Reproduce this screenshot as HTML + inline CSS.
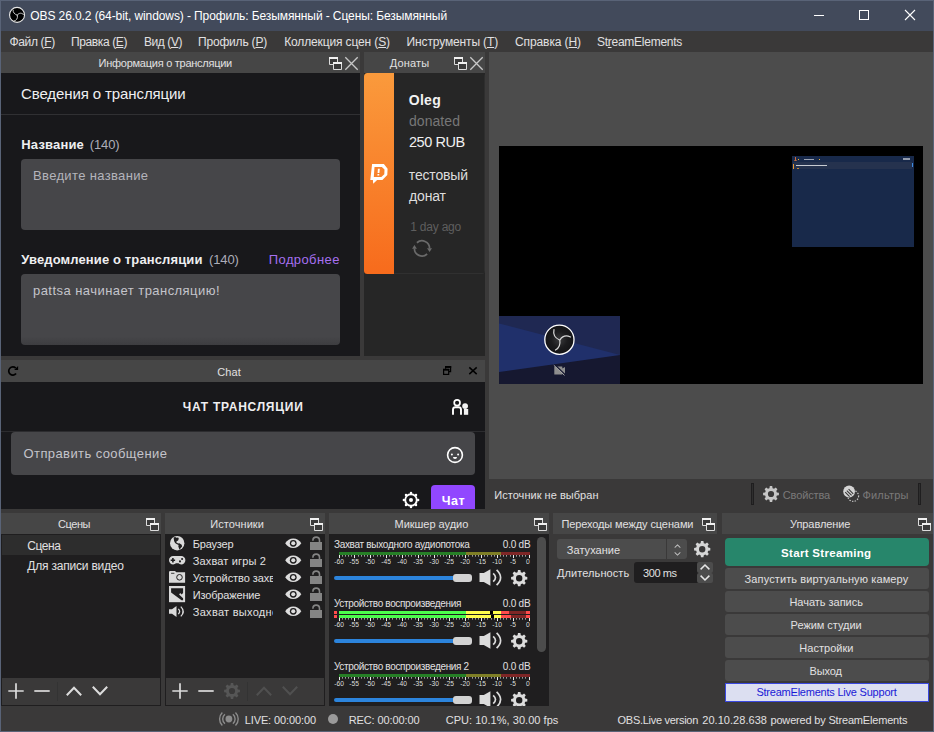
<!DOCTYPE html>
<html><head><meta charset="utf-8">
<style>
*{box-sizing:border-box;margin:0;padding:0}
html,body{width:934px;height:732px;overflow:hidden;background:#3a3939}
body{position:relative;font-family:"Liberation Sans",sans-serif;font-size:12px;color:#e1e0e1}
.a{position:absolute}
.t{position:absolute;white-space:nowrap;line-height:1}
.dt{position:absolute;background:#464646;height:21px}
.dk{background:#1f1e1f}
svg{position:absolute;overflow:visible}
.btn{position:absolute;left:725px;width:204px;height:21px;background:#4c4c4c;border-radius:3px}
</style></head><body>

<svg width="0" height="0" style="left:0;top:0"><defs>
<symbol id="fl" viewBox="0 0 13 13" overflow="visible"><path d="M.5 .5h8v7h-8z" fill="#3a3a3a" stroke="#dcdcdc" stroke-width="1"/><path d="M0 1h9" stroke="#f0f0f0" stroke-width="2"/><path d="M4.500 5.500h8v7h-8z" fill="#3a3a3a" stroke="#dcdcdc" stroke-width="1"/><path d="M4 6h9" stroke="#f0f0f0" stroke-width="2"/></symbol>
<symbol id="cx" viewBox="0 0 13 13" overflow="visible"><path d="M.3 .3L12.700 12.700M12.700 .3L.3 12.700" stroke="#c8c8c8" stroke-width="1.300"/></symbol>

<symbol id="plus" viewBox="0 0 16 16" overflow="visible"><path d="M8 .3v15.400M.3 8h15.400" stroke="#dcdcdc" stroke-width="1.700"/></symbol>
<symbol id="minus" viewBox="0 0 16 16" overflow="visible"><path d="M.3 8h15.400" stroke="#dcdcdc" stroke-width="1.700"/></symbol>
<symbol id="up" viewBox="0 0 16 10" overflow="visible"><path d="M.8 9.300L8 1.800l7.200 7.500" fill="none" stroke-width="2"/></symbol>
<symbol id="dn" viewBox="0 0 16 10" overflow="visible"><path d="M.8.700L8 8.200l7.200-7.500" fill="none" stroke-width="2"/></symbol>
<symbol id="gear" viewBox="-10 -10 20 20" overflow="visible"><path fill-rule="evenodd" d="M-1.97 -7.34L-1.48 -9.89L1.48 -9.89L1.97 -7.34L3.80 -6.58L5.95 -8.04L8.04 -5.95L6.58 -3.80L7.34 -1.97L9.89 -1.48L9.89 1.48L7.34 1.97L6.58 3.80L8.04 5.95L5.95 8.04L3.80 6.58L1.97 7.34L1.48 9.89L-1.48 9.89L-1.97 7.34L-3.80 6.58L-5.95 8.04L-8.04 5.95L-6.58 3.80L-7.34 1.97L-9.89 1.48L-9.89 -1.48L-7.34 -1.97L-6.58 -3.80L-8.04 -5.95L-5.95 -8.04L-3.80 -6.58Z M0 -3.9a3.9 3.9 0 1 0 0 7.8a3.9 3.9 0 1 0 0 -7.8z"/></symbol>
<symbol id="eye" viewBox="0 0 17 10" overflow="visible"><path d="M.2 5C2.200 1.800 5 .1 8.500.1S14.800 1.800 16.800 5c-2 3.200-4.800 4.900-8.300 4.900S2.200 8.200.2 5z" fill="#dedede"/><circle cx="8.500" cy="5" r="3.500" fill="#1f1e1f"/><circle cx="8.500" cy="5" r="2.100" fill="#dedede"/></symbol>
<symbol id="lock" viewBox="0 0 12 14" overflow="visible"><rect x="0" y="6" width="12" height="8" fill="#848484"/><path d="M2.900 4.800v-.4a3.300 3.300 0 0 1 6.600 0v2" fill="none" stroke="#848484" stroke-width="1.600"/></symbol>
<symbol id="spk" viewBox="0 0 23 17" overflow="visible"><path d="M.5 4.100h4.300l6.600-3.900v16.600l-6.600-3.900h-4.300z" fill="#dcdcdc"/><path d="M14.200 4.300Q18.800 8.500 14.200 12.700 M17.600 .9Q25.600 8.500 17.600 16.100" fill="none" stroke="#dcdcdc" stroke-width="1.700"/></symbol>
</defs></svg>
<!-- TITLE BAR -->
<div class="a" id="titlebar" style="left:0;top:0;width:934px;height:31px;background:#424a5b"></div>

<!-- title bar icons -->
<svg style="left:0;top:0" width="32" height="31" viewBox="0 0 32 31"><circle cx="17.050" cy="14.900" r="7.500" fill="#000" stroke="#e6e6e6" stroke-width="1.100"/><path d="M13.100 10.200c-.2 2.300 1.300 3.900 3.900 4.900 M23.600 14.700c-1.600-2-4.400-2.200-6.300.2 M13.900 21.100c2.600-.6 4.100-2.500 3.500-5.800" fill="none" stroke="#dcdcdc" stroke-width=".900" stroke-linecap="round"/></svg>
<div class="a" style="left:814px;top:15px;width:10px;height:1px;background:#fff"></div>
<div class="a" style="left:859px;top:10px;width:10px;height:10px;border:1px solid #fff"></div>
<svg style="left:905px;top:10px" width="10" height="10" viewBox="0 0 10 10"><path d="M0 0L10 10M10 0L0 10" stroke="#fff" stroke-width="1.1"/></svg>
<!-- MENU -->
<div class="a" id="menubar" style="left:0;top:31px;width:934px;height:21px;background:#3a3939"></div>

<!-- DOCK: stream info -->
<div class="dt" style="left:0;top:52px;width:360px"></div>
<div class="a" style="left:0;top:73px;width:360px;height:283px;background:#18181b"></div>
<!-- DOCK: donations -->
<div class="dt" style="left:364px;top:52px;width:121px"></div>
<div class="a" style="left:364px;top:73px;width:121px;height:283px;background:#262626"></div>

<!-- twitch panel -->
<div class="a" style="left:1px;top:114px;width:359px;height:1px;background:#303033"></div>
<div class="a" style="left:21px;top:159px;width:319px;height:71px;background:#464649;border-radius:4px"></div>
<div class="a" style="left:21px;top:274px;width:319px;height:71px;background:linear-gradient(#464649 0,#464649 88%,#3d3d40 100%);border-radius:4px"></div>
<!-- donation card -->
<div class="a" style="left:364px;top:73px;width:121px;height:201px;background:#262626;border-radius:3.500px;overflow:hidden"><div class="a" style="left:0;top:0;width:30px;height:201px;background:linear-gradient(#fa9a3c,#f76b1c)"></div><div class="a" style="left:30px;top:200px;width:91px;height:1px;background:#303030"></div><div class="a" style="left:120px;top:0;width:1px;height:201px;background:#2e2e2e"></div></div>
<svg style="left:364px;top:158px" width="32" height="32" viewBox="0 0 32 32"><path fill-rule="evenodd" d="M8.100 5.900H19.900L23.600 10.700L23.300 17L18.400 21.900H13.100L9.200 25.800L8.900 21.900H6.300Z M10.500 9H17.900L20.500 11.400L20.300 16.200L17.300 19H9.800Z" fill="#fff"/><path d="M13.900 10.700h1.900l-.4 4.400h-1.800z M13.500 16h1.800l-.1 1.400h-1.800z" fill="#fff"/></svg>
<svg style="left:406px;top:232px" width="32" height="32" viewBox="0 0 32 32"><path d="M10.900 10.750A7.600 7.600 0 0 1 23.600 16.400 M21.130 22A7.600 7.600 0 0 1 8.400 16.400" fill="none" stroke="#6a6a6a" stroke-width="1.700"/><path d="M21 16.200h5l-2.400 3.900z M6.100 16.800h4.800l-2.500-3.900z" fill="#6a6a6a"/></svg>
<!-- PREVIEW -->
<div class="a" style="left:489px;top:52px;width:445px;height:427px;background:#4c4c4c"></div>
<div class="a" style="left:499px;top:146px;width:424px;height:238px;background:#000"></div>
<!-- DOCK: chat -->
<div class="dt" style="left:0;top:360px;width:485px;height:22px"></div>
<div class="a" style="left:0;top:382px;width:485px;height:127px;background:#18181b"></div>


<!-- preview thumbnails -->
<div class="a" style="left:792px;top:156px;width:122px;height:91px;background:#18294a"></div>
<div class="a" style="left:793px;top:162.400px;width:118.500px;height:6.300px;background:#25324e"></div>
<div class="a" style="left:793px;top:163.500px;width:1px;height:5.200px;background:#e8962e"></div>
<div class="a" style="left:796px;top:164.900px;width:31px;height:1.400px;background:#e4e6ea;opacity:.85"></div>
<div class="a" style="left:796.500px;top:168px;width:2px;height:.7px;background:#e8962e;opacity:.8"></div>
<div class="a" style="left:912px;top:163.100px;width:1px;height:4px;background:#3f8be0"></div>
<div class="a" style="left:794.500px;top:157px;width:1px;height:3.500px;background:#e0703a;opacity:.9"></div>
<div class="a" style="left:793.600px;top:159.600px;width:3px;height:1px;background:#c07040;opacity:.7"></div>
<div class="a" style="left:798px;top:159px;width:1px;height:1px;background:#e8b030"></div>
<div class="a" style="left:804px;top:158.500px;width:9.700px;height:1.300px;background:#c8ccd6;opacity:.75"></div>
<div class="a" style="left:819px;top:159px;width:1.200px;height:1px;background:#e8b030"></div>
<div class="a" style="left:902.800px;top:158.300px;width:7.700px;height:1.400px;background:#c8ccd6;opacity:.7"></div>
<svg style="left:499px;top:316px" width="121" height="68" viewBox="0 0 121 68"><rect width="121" height="68" fill="#1f2852"/><path d="M0 7.500L121 39v29H0z" fill="#20306b"/><path d="M0 56L121 39v29H0z" fill="#161830"/>
<defs><radialGradient id="lg"><stop offset="0" stop-color="#3a3a3c"/><stop offset=".55" stop-color="#1c1c1e"/><stop offset="1" stop-color="#141416"/></radialGradient></defs><circle cx="60.400" cy="23.700" r="14.600" fill="url(#lg)" stroke="#fff" stroke-width="1.300"/><path d="M55 13.500c-1 4.500 1 8.500 5.500 10.500 M71.500 21c-4-1.800-8-1-10.500 2.800 M56.500 34c3.500-2 5-5.500 4.300-10" fill="none" stroke="#d8d8d8" stroke-width="1.200" stroke-linecap="round"/>
<path d="M55.300 50.600h8v2l2.700-1.600v7l-2.700-1.600v2.100h-8z" fill="#8e8e8e"/><path d="M55.800 48.700l10.700 10.200" stroke="#161830" stroke-width="1.200"/><path d="M54.800 49.200l10.700 10.200" stroke="#a4a4a4" stroke-width="1"/></svg>

<!-- chat dock -->
<svg style="left:7px;top:365px" width="12" height="12" viewBox="0 0 12 12"><path d="M8.750 3.100A4.100 4.100 0 1 0 9.080 8.520" fill="none" stroke="#000" stroke-width="1.700"/><path d="M11.100 1v3.900h-3.900z" fill="#000"/></svg>
<svg style="left:436px;top:360px" width="50" height="24" viewBox="0 0 50 24"><path d="M9.600 8.800V6.700H14.600V11.700H13" fill="none" stroke="#000" stroke-width="1.200"/><path d="M9 7h6.200" stroke="#000" stroke-width="1.800"/><rect x="7.600" y="9.700" width="5.100" height="4.700" fill="none" stroke="#000" stroke-width="1.200"/><path d="M7 9.600h6.300" stroke="#000" stroke-width="1.800"/><path d="M33.300 7.400L40.700 14.100M40.700 7.400L33.300 14.100" stroke="#000" stroke-width="1.500"/></svg>

<div class="a" style="left:1px;top:431px;width:484px;height:1px;background:#2c2c2f"></div>
<div class="a" style="left:11px;top:432px;width:464px;height:43px;background:#464649;border-radius:4px"></div>
<div class="a" style="left:431px;top:485px;width:44px;height:24px;background:#9147ff;border-radius:4px 4px 0 0"></div>
<svg style="left:436px;top:390px" width="50" height="30" viewBox="0 0 50 30"><circle cx="21.100" cy="12.800" r="2.900" fill="none" stroke="#fff" stroke-width="1.700"/><path d="M17 24.800v-5.200a2.400 2.400 0 0 1 2.400-2.400h3.200a2.400 2.400 0 0 1 2.400 2.400v5.200" fill="none" stroke="#fff" stroke-width="1.900"/><circle cx="29.100" cy="16.100" r="2.900" fill="#f2f2f2"/><rect x="27.900" y="19" width="4.300" height="5.800" fill="#f2f2f2"/></svg>
<svg style="left:445px;top:445px" width="20" height="20" viewBox="0 0 20 20"><circle cx="10" cy="10" r="7.400" fill="none" stroke="#fff" stroke-width="1.600"/><circle cx="6.900" cy="9.600" r="1" fill="#fff"/><circle cx="13.100" cy="9.600" r="1" fill="#fff"/><path d="M8 11.900a2 2.100 0 0 0 4 0z" fill="#fff"/></svg>
<svg style="left:401px;top:490px" width="20" height="20" viewBox="0 0 20 20" fill="#fff"><circle cx="10" cy="10" r="5.800" fill="none" stroke="#fff" stroke-width="1.900"/><circle cx="17.10" cy="10.00" r="1.250"/><circle cx="15.02" cy="15.02" r="1.250"/><circle cx="10.00" cy="17.10" r="1.250"/><circle cx="4.98" cy="15.02" r="1.250"/><circle cx="2.90" cy="10.00" r="1.250"/><circle cx="4.98" cy="4.98" r="1.250"/><circle cx="10.00" cy="2.90" r="1.250"/><circle cx="15.02" cy="4.98" r="1.250"/><circle cx="10" cy="10" r="2"/></svg>
<!-- BOTTOM DOCKS -->
<div class="dt" style="left:0;top:513px;width:161px"></div>
<div class="dt" style="left:165px;top:513px;width:160px"></div>
<div class="dt" style="left:329px;top:513px;width:220px"></div>
<div class="dt" style="left:553px;top:513px;width:164px"></div>
<div class="dt" style="left:722px;top:513px;width:212px"></div>


<!-- dock title icons -->
<svg style="left:329px;top:57px" width="13" height="13"><use href="#fl"/></svg>
<svg style="left:345px;top:57px" width="13" height="13"><use href="#cx"/></svg>
<svg style="left:454px;top:57px" width="13" height="13"><use href="#fl"/></svg>
<svg style="left:470px;top:57px" width="13" height="13"><use href="#cx"/></svg>
<svg style="left:146px;top:518px" width="13" height="13"><use href="#fl"/></svg>
<svg style="left:310px;top:518px" width="13" height="13"><use href="#fl"/></svg>
<svg style="left:534px;top:518px" width="13" height="13"><use href="#fl"/></svg>
<svg style="left:702px;top:518px" width="13" height="13"><use href="#fl"/></svg>
<svg style="left:918px;top:518px" width="13" height="13"><use href="#fl"/></svg>

<!-- scenes -->
<div class="a" style="left:1px;top:534px;width:160px;height:172px;background:#1f1e1f"></div>
<div class="a dk" style="left:2px;top:535px;width:158px;height:143px"></div>
<div class="a" style="left:2px;top:535px;width:158px;height:20px;background:#2d2d2d"></div>
<div class="a" style="left:2px;top:678px;width:158px;height:27px;background:#3a3939"></div>
<svg style="left:8px;top:683px" width="16" height="16"><use href="#plus"/></svg>
<svg style="left:34px;top:683px" width="16" height="16"><use href="#minus"/></svg>
<div class="a" style="left:57px;top:682px;width:1px;height:19px;background:#333"></div>
<svg style="left:66px;top:686px" width="16" height="10" stroke="#dcdcdc"><use href="#up"/></svg>
<svg style="left:92px;top:686px" width="16" height="10" stroke="#dcdcdc"><use href="#dn"/></svg>
<!-- sources -->
<div class="a" style="left:165px;top:534px;width:160px;height:172px;background:#1f1e1f"></div>
<div class="a dk" style="left:166px;top:535px;width:158px;height:143px"></div>
<div class="a" style="left:166px;top:678px;width:158px;height:27px;background:#3a3939"></div>
<svg style="left:172px;top:683px" width="16" height="16"><use href="#plus"/></svg>
<svg style="left:198px;top:683px" width="16" height="16"><use href="#minus"/></svg>
<svg style="left:224px;top:683px" width="16" height="16" fill="#565656"><use href="#gear"/></svg>
<div class="a" style="left:247px;top:682px;width:1px;height:19px;background:#333"></div>
<svg style="left:256px;top:686px" width="16" height="10" stroke="#505050"><use href="#up"/></svg>
<svg style="left:282px;top:686px" width="16" height="10" stroke="#505050"><use href="#dn"/></svg>
<div class="a" style="left:192.800px;top:569px;width:80.400px;height:18px;overflow:hidden"><div class="t" style="left:0;top:4px;font-size:11px;letter-spacing:-0.055px">Устройство захвата</div></div>
<div class="a" style="left:192.800px;top:603px;width:80.400px;height:18px;overflow:hidden"><div class="t" style="left:0;top:4px;font-size:11px;letter-spacing:0.281px">Захват выходного</div></div>
<svg style="left:284.500px;top:537.5px" width="16.500" height="10.600"><use href="#eye"/></svg><svg style="left:310px;top:536px" width="12" height="14"><use href="#lock"/></svg>
<svg style="left:284.500px;top:554.5px" width="16.500" height="10.600"><use href="#eye"/></svg><svg style="left:310px;top:553px" width="12" height="14"><use href="#lock"/></svg>
<svg style="left:284.500px;top:571.5px" width="16.500" height="10.600"><use href="#eye"/></svg><svg style="left:310px;top:570px" width="12" height="14"><use href="#lock"/></svg>
<svg style="left:284.500px;top:588.5px" width="16.500" height="10.600"><use href="#eye"/></svg><svg style="left:310px;top:587px" width="12" height="14"><use href="#lock"/></svg>
<svg style="left:284.500px;top:605.5px" width="16.500" height="10.600"><use href="#eye"/></svg><svg style="left:310px;top:604px" width="12" height="14"><use href="#lock"/></svg>

<!-- source type icons -->
<svg style="left:169.800px;top:535.700px" width="14.400" height="14.400" viewBox="0 0 14.400 14.400"><circle cx="7.200" cy="7.200" r="7.200" fill="#dadada"/><path d="M3.600 1.600L5.300 1l1 .8 1.900-.4.600 1.300-.7 1.900-1.400.6-.5 1.100 1.900 1.100 1.300-.2 2.300 1.500.4 1.900-1.500 1.700-1.100 1.500-.6-1.900-.6-1.300.3-1.500-2-1.200-1.500-.9-1-2.100z" fill="#1f1e1f"/></svg>
<svg style="left:168.800px;top:555.700px" width="16.400" height="8.600" viewBox="0 0 16.400 8.600"><path d="M4.200 0h8a4.200 4.200 0 0 1 0 8.400c-1.200 0-2-.5-2.600-1.100h-2.800c-.6.600-1.400 1.100-2.600 1.100a4.200 4.200 0 0 1 0-8.400z" fill="#dadada"/><path d="M1.700 4.200h4.400M3.900 2v4.400" stroke="#1f1e1f" stroke-width="1.600"/><circle cx="13.100" cy="3" r="1.050" fill="#1f1e1f"/><circle cx="11" cy="5.400" r="1.050" fill="#1f1e1f"/></svg>
<svg style="left:168.900px;top:571.100px" width="16.100" height="11.800" viewBox="0 0 16.100 11.800"><path d="M0 1.200Q0 0 1.200 0H6l1.300 1.200h8.800v10.600H0z" fill="#dadada"/><path d="M2.100 2.300h3.300" stroke="#2a2a2a" stroke-width=".9"/><circle cx="10.500" cy="6.300" r="2.800" fill="#dadada" stroke="#1f1e1f" stroke-width="1"/></svg>
<svg style="left:168.900px;top:586px" width="16.100" height="16.200" viewBox="0 0 16.100 16.200"><rect width="16.100" height="16.200" fill="#dadada"/><path d="M2.100 2.200H14.100V7L12.500 8.600L11.200 7L10.100 8.400L14.100 12.300V14.200H12.600L2.100 6.500z" fill="#1f1e1f"/></svg>
<svg style="left:169.300px;top:605.700px" width="15" height="11" viewBox="0 0 15 11"><path d="M0 3.200h3l4.500-3.200v11l-4.500-3.200h-3z" fill="#dadada"/><path d="M9.300 2.900Q12 5.500 9.300 8.100 M11.800 .6Q16.600 5.500 11.800 10.400" fill="none" stroke="#dadada" stroke-width="1.300"/></svg>

<!-- mixer -->
<div class="a dk" style="left:329px;top:534px;width:220px;height:172px"></div>
<div class="a" style="left:537px;top:537px;width:9px;height:115px;background:#4c4c4c;border-radius:4.500px"></div>
<div class="a" style="left:339px;top:552px;width:190.700px;height:3px;background:linear-gradient(90deg,#267f26 0,#267f26 126.800px,#7f7f26 126.800px,#7f7f26 162px,#7f2626 162px)"></div>
<svg style="left:339px;top:555px" width="192" height="4" viewBox="0 0 192 4">
<path d="M3.5 0v1.700M6.5 0v1.700M9.5 0v1.700M12.5 0v1.700M19.5 0v1.700M22.5 0v1.700M25.5 0v1.700M28.5 0v1.700M34.5 0v1.700M38.5 0v1.700M41.5 0v1.700M44.5 0v1.700M50.5 0v1.700M53.5 0v1.700M57.5 0v1.700M60.5 0v1.700M66.5 0v1.700M69.5 0v1.700M72.5 0v1.700M76.5 0v1.700M82.5 0v1.700M85.5 0v1.700M88.5 0v1.700M91.5 0v1.700M98.5 0v1.700M101.5 0v1.700M104.5 0v1.700M107.5 0v1.700M114.5 0v1.700M117.5 0v1.700M120.5 0v1.700M123.5 0v1.700M129.5 0v1.700M133.5 0v1.700M136.5 0v1.700M139.5 0v1.700M145.5 0v1.700M148.5 0v1.700M152.5 0v1.700M155.5 0v1.700M161.5 0v1.700M164.5 0v1.700M167.5 0v1.700M171.5 0v1.700M177.5 0v1.700M180.5 0v1.700M183.5 0v1.700M186.5 0v1.700" stroke="#9c9c9c" stroke-width="1"/><path d="M0.5 0v3.100M15.5 0v3.100M31.5 0v3.100M47.5 0v3.100M63.5 0v3.100M79.5 0v3.100M95.5 0v3.100M110.5 0v3.100M126.5 0v3.100M142.5 0v3.100M158.5 0v3.100M174.5 0v3.100M190.5 0v3.100" stroke="#ececec" stroke-width="1"/></svg>
<div class="t" style="left:334.2px;top:558.6px;font-size:6.700px;color:#dedede;letter-spacing:0px">-60</div>
<div class="t" style="left:349.2px;top:558.6px;font-size:6.700px;color:#dedede;letter-spacing:0px">-55</div>
<div class="t" style="left:365.2px;top:558.6px;font-size:6.700px;color:#dedede;letter-spacing:0px">-50</div>
<div class="t" style="left:381.2px;top:558.6px;font-size:6.700px;color:#dedede;letter-spacing:0px">-45</div>
<div class="t" style="left:397.2px;top:558.6px;font-size:6.700px;color:#dedede;letter-spacing:0px">-40</div>
<div class="t" style="left:413.2px;top:558.6px;font-size:6.700px;color:#dedede;letter-spacing:0px">-35</div>
<div class="t" style="left:429.2px;top:558.6px;font-size:6.700px;color:#dedede;letter-spacing:0px">-30</div>
<div class="t" style="left:444.2px;top:558.6px;font-size:6.700px;color:#dedede;letter-spacing:0px">-25</div>
<div class="t" style="left:460.2px;top:558.6px;font-size:6.700px;color:#dedede;letter-spacing:0px">-20</div>
<div class="t" style="left:476.2px;top:558.6px;font-size:6.700px;color:#dedede;letter-spacing:0px">-15</div>
<div class="t" style="left:492.2px;top:558.6px;font-size:6.700px;color:#dedede;letter-spacing:0px">-10</div>
<div class="t" style="left:510.1px;top:558.6px;font-size:6.700px;color:#dedede;letter-spacing:-0.1px">-5</div>
<div class="t" style="left:526.1px;top:558.6px;font-size:6.700px;color:#dedede">0</div>
<div class="a" style="left:334px;top:576px;width:121px;height:4px;background:#2c84dc;border-radius:2px"></div><div class="a" style="left:453px;top:574px;width:19px;height:8px;background:#d2d2d2;border-radius:3px"></div><svg style="left:478.500px;top:569.2px" width="23" height="17"><use href="#spk"/></svg><svg style="left:510.800px;top:569.8px" width="16.400" height="16.400" fill="#dcdcdc"><use href="#gear"/></svg>
<div class="a" style="left:334px;top:611px;width:3.300px;height:3px;background:#ff4c4c"></div><div class="a" style="left:339px;top:611px;width:190.700px;height:3px;background:linear-gradient(90deg,#4cff4c 0,#4cff4c 126.800px,#ffff4c 126.800px,#ffff4c 151.1px,#000 151.1px,#000 153.8px,#ffff4c 153.8px,#ffff4c 162px,#ff4c4c 162px,#ff4c4c 170.1px,#7f2626 170.1px,#7f2626 186.800px,#ff4c4c 186.800px)"></div>
<div class="a" style="left:334px;top:615px;width:3.300px;height:3px;background:#ff4c4c"></div><div class="a" style="left:339px;top:615px;width:190.700px;height:3px;background:linear-gradient(90deg,#4cff4c 0,#4cff4c 126.800px,#ffff4c 126.800px,#ffff4c 151.9px,#000 151.9px,#000 154.9px,#ffff4c 154.9px,#ffff4c 162px,#ff4c4c 162px,#ff4c4c 172px,#7f2626 172px,#7f2626 186.800px,#ff4c4c 186.800px)"></div>
<svg style="left:339px;top:618px" width="192" height="4" viewBox="0 0 192 4">
<path d="M3.5 0v1.700M6.5 0v1.700M9.5 0v1.700M12.5 0v1.700M19.5 0v1.700M22.5 0v1.700M25.5 0v1.700M28.5 0v1.700M34.5 0v1.700M38.5 0v1.700M41.5 0v1.700M44.5 0v1.700M50.5 0v1.700M53.5 0v1.700M57.5 0v1.700M60.5 0v1.700M66.5 0v1.700M69.5 0v1.700M72.5 0v1.700M76.5 0v1.700M82.5 0v1.700M85.5 0v1.700M88.5 0v1.700M91.5 0v1.700M98.5 0v1.700M101.5 0v1.700M104.5 0v1.700M107.5 0v1.700M114.5 0v1.700M117.5 0v1.700M120.5 0v1.700M123.5 0v1.700M129.5 0v1.700M133.5 0v1.700M136.5 0v1.700M139.5 0v1.700M145.5 0v1.700M148.5 0v1.700M152.5 0v1.700M155.5 0v1.700M161.5 0v1.700M164.5 0v1.700M167.5 0v1.700M171.5 0v1.700M177.5 0v1.700M180.5 0v1.700M183.5 0v1.700M186.5 0v1.700" stroke="#9c9c9c" stroke-width="1"/><path d="M0.5 0v3.100M15.5 0v3.100M31.5 0v3.100M47.5 0v3.100M63.5 0v3.100M79.5 0v3.100M95.5 0v3.100M110.5 0v3.100M126.5 0v3.100M142.5 0v3.100M158.5 0v3.100M174.5 0v3.100M190.5 0v3.100" stroke="#ececec" stroke-width="1"/></svg>
<div class="t" style="left:334.2px;top:621.6px;font-size:6.700px;color:#dedede;letter-spacing:0px">-60</div>
<div class="t" style="left:349.2px;top:621.6px;font-size:6.700px;color:#dedede;letter-spacing:0px">-55</div>
<div class="t" style="left:365.2px;top:621.6px;font-size:6.700px;color:#dedede;letter-spacing:0px">-50</div>
<div class="t" style="left:381.2px;top:621.6px;font-size:6.700px;color:#dedede;letter-spacing:0px">-45</div>
<div class="t" style="left:397.2px;top:621.6px;font-size:6.700px;color:#dedede;letter-spacing:0px">-40</div>
<div class="t" style="left:413.2px;top:621.6px;font-size:6.700px;color:#dedede;letter-spacing:0px">-35</div>
<div class="t" style="left:429.2px;top:621.6px;font-size:6.700px;color:#dedede;letter-spacing:0px">-30</div>
<div class="t" style="left:444.2px;top:621.6px;font-size:6.700px;color:#dedede;letter-spacing:0px">-25</div>
<div class="t" style="left:460.2px;top:621.6px;font-size:6.700px;color:#dedede;letter-spacing:0px">-20</div>
<div class="t" style="left:476.2px;top:621.6px;font-size:6.700px;color:#dedede;letter-spacing:0px">-15</div>
<div class="t" style="left:492.2px;top:621.6px;font-size:6.700px;color:#dedede;letter-spacing:0px">-10</div>
<div class="t" style="left:510.1px;top:621.6px;font-size:6.700px;color:#dedede;letter-spacing:-0.1px">-5</div>
<div class="t" style="left:526.1px;top:621.6px;font-size:6.700px;color:#dedede">0</div>
<div class="a" style="left:334px;top:639px;width:121px;height:4px;background:#2c84dc;border-radius:2px"></div><div class="a" style="left:453px;top:637px;width:19px;height:8px;background:#d2d2d2;border-radius:3px"></div><svg style="left:478.500px;top:632.2px" width="23" height="17"><use href="#spk"/></svg><svg style="left:510.800px;top:632.8px" width="16.400" height="16.400" fill="#dcdcdc"><use href="#gear"/></svg>
<div class="a" style="left:339px;top:674px;width:190.700px;height:3px;background:linear-gradient(90deg,#267f26 0,#267f26 126.800px,#7f7f26 126.800px,#7f7f26 162px,#7f2626 162px)"></div>
<svg style="left:339px;top:677px" width="192" height="4" viewBox="0 0 192 4">
<path d="M3.5 0v1.700M6.5 0v1.700M9.5 0v1.700M12.5 0v1.700M19.5 0v1.700M22.5 0v1.700M25.5 0v1.700M28.5 0v1.700M34.5 0v1.700M38.5 0v1.700M41.5 0v1.700M44.5 0v1.700M50.5 0v1.700M53.5 0v1.700M57.5 0v1.700M60.5 0v1.700M66.5 0v1.700M69.5 0v1.700M72.5 0v1.700M76.5 0v1.700M82.5 0v1.700M85.5 0v1.700M88.5 0v1.700M91.5 0v1.700M98.5 0v1.700M101.5 0v1.700M104.5 0v1.700M107.5 0v1.700M114.5 0v1.700M117.5 0v1.700M120.5 0v1.700M123.5 0v1.700M129.5 0v1.700M133.5 0v1.700M136.5 0v1.700M139.5 0v1.700M145.5 0v1.700M148.5 0v1.700M152.5 0v1.700M155.5 0v1.700M161.5 0v1.700M164.5 0v1.700M167.5 0v1.700M171.5 0v1.700M177.5 0v1.700M180.5 0v1.700M183.5 0v1.700M186.5 0v1.700" stroke="#9c9c9c" stroke-width="1"/><path d="M0.5 0v3.100M15.5 0v3.100M31.5 0v3.100M47.5 0v3.100M63.5 0v3.100M79.5 0v3.100M95.5 0v3.100M110.5 0v3.100M126.5 0v3.100M142.5 0v3.100M158.5 0v3.100M174.5 0v3.100M190.5 0v3.100" stroke="#ececec" stroke-width="1"/></svg>
<div class="t" style="left:334.2px;top:680.6px;font-size:6.700px;color:#dedede;letter-spacing:0px">-60</div>
<div class="t" style="left:349.2px;top:680.6px;font-size:6.700px;color:#dedede;letter-spacing:0px">-55</div>
<div class="t" style="left:365.2px;top:680.6px;font-size:6.700px;color:#dedede;letter-spacing:0px">-50</div>
<div class="t" style="left:381.2px;top:680.6px;font-size:6.700px;color:#dedede;letter-spacing:0px">-45</div>
<div class="t" style="left:397.2px;top:680.6px;font-size:6.700px;color:#dedede;letter-spacing:0px">-40</div>
<div class="t" style="left:413.2px;top:680.6px;font-size:6.700px;color:#dedede;letter-spacing:0px">-35</div>
<div class="t" style="left:429.2px;top:680.6px;font-size:6.700px;color:#dedede;letter-spacing:0px">-30</div>
<div class="t" style="left:444.2px;top:680.6px;font-size:6.700px;color:#dedede;letter-spacing:0px">-25</div>
<div class="t" style="left:460.2px;top:680.6px;font-size:6.700px;color:#dedede;letter-spacing:0px">-20</div>
<div class="t" style="left:476.2px;top:680.6px;font-size:6.700px;color:#dedede;letter-spacing:0px">-15</div>
<div class="t" style="left:492.2px;top:680.6px;font-size:6.700px;color:#dedede;letter-spacing:0px">-10</div>
<div class="t" style="left:510.1px;top:680.6px;font-size:6.700px;color:#dedede;letter-spacing:-0.1px">-5</div>
<div class="t" style="left:526.1px;top:680.6px;font-size:6.700px;color:#dedede">0</div>
<div class="a" style="left:329px;top:690px;width:220px;height:16px;overflow:hidden"><div class="a" style="left:-329px;top:-690px"><div class="a" style="left:334px;top:698px;width:121px;height:4px;background:#2c84dc;border-radius:2px"></div><div class="a" style="left:453px;top:696px;width:19px;height:8px;background:#d2d2d2;border-radius:3px"></div><svg style="left:478.500px;top:691.2px" width="23" height="17"><use href="#spk"/></svg><svg style="left:510.800px;top:691.8px" width="16.400" height="16.400" fill="#dcdcdc"><use href="#gear"/></svg>
</div></div>

<!-- transitions -->
<div class="a" style="left:557px;top:539px;width:130px;height:20px;background:#4c4c4c;border-radius:3px"></div>
<div class="a" style="left:666px;top:539px;width:1px;height:20px;background:#3a3939"></div>
<svg style="left:673.500px;top:543.500px" width="7" height="12" viewBox="0 0 8 11" preserveAspectRatio="none" fill="none" stroke="#c8c8c8" stroke-width="1"><path d="M.8 3.300L4 .8l3.200 2.500M.8 7.700L4 10.200l3.200-2.500"/></svg>
<svg style="left:693.900px;top:540.700px" width="16.400" height="16.400" fill="#d6d6d6"><use href="#gear"/></svg>
<div class="a dk" style="left:634px;top:562px;width:66px;height:21px;border-radius:3px"></div>
<div class="a" style="left:697px;top:562px;width:16px;height:10.500px;background:#4c4c4c;border-radius:2px"></div>
<div class="a" style="left:697px;top:573px;width:16px;height:10px;background:#4c4c4c;border-radius:2px"></div>
<svg style="left:700px;top:564px" width="10" height="6" viewBox="0 0 10 6" fill="none" stroke="#e6e6e6" stroke-width="1.500"><path d="M.6 5.400L5 1l4.400 4.400"/></svg>
<svg style="left:700px;top:575px" width="10" height="6" viewBox="0 0 10 6" fill="none" stroke="#e6e6e6" stroke-width="1.500"><path d="M.6.600L5 5l4.400-4.400"/></svg>

<!-- controls -->
<div class="a" style="left:725px;top:538px;width:204px;height:28px;background:#27866b;border-radius:4px"></div>
<div class="btn" style="top:568px"></div>
<div class="btn" style="top:591px"></div>
<div class="btn" style="top:614px"></div>
<div class="btn" style="top:637px"></div>
<div class="btn" style="top:660px"></div>
<div class="a" style="left:725px;top:683px;width:204px;height:19px;background:#dcdff1;border:1px solid #3a48e0"></div>

<!-- source toolbar -->
<div class="a" style="left:751px;top:483px;width:3px;height:22px;background:#2e2e2e;border:1px solid #1f1e1f"></div>
<div class="a" style="left:918px;top:483px;width:3px;height:22px;background:#2e2e2e;border:1px solid #1f1e1f"></div>
<svg style="left:763px;top:486px" width="16" height="16" fill="#c6c6c6"><use href="#gear"/></svg>
<svg style="left:843px;top:486px" width="17" height="17" viewBox="0 0 17 17"><circle cx="10.200" cy="10" r="5.400" fill="none" stroke="#c4c4c4" stroke-width="1.200" stroke-dasharray="1.400 1.300"/><circle cx="6.100" cy="5.500" r="5.900" fill="#d4d4d4"/><path d="M2.2 6.200L6.600 10.600M3.800 4.600L8.600 9.400M5.600 3.200L10.200 7.800" stroke="#3a3939" stroke-width="1.1"/></svg>
<!-- status icons -->
<svg style="left:219px;top:710px" width="20" height="18" viewBox="0 0 20 18"><circle cx="9.900" cy="9" r="3.400" fill="#8c8c8c"/><path d="M13.890 4.250A6.200 6.200 0 0 1 13.890 13.750 M5.910 4.250A6.200 6.200 0 0 0 5.910 13.750 M16.480 2.420A9.300 9.300 0 0 1 16.480 15.580 M3.320 2.420A9.300 9.300 0 0 0 3.320 15.580" fill="none" stroke="#8c8c8c" stroke-width="1.400"/></svg>
<div class="a" style="left:328px;top:714px;width:10px;height:10px;border-radius:5px;background:#9a9a9a"></div>
<div class="t" style="left:30.3px;top:10px;font-size:12px;color:#fff;letter-spacing:-0.095px;">OBS 26.0.2 (64-bit, windows) - Профиль: Безымянный - Сцены: Безымянный</div>
<div class="t" style="left:9.5px;top:36px;font-size:12px;color:#e1e0e1;letter-spacing:-0.359px;">Файл (<u>F</u>)</div>
<div class="t" style="left:71.0px;top:36px;font-size:12px;color:#e1e0e1;letter-spacing:-0.388px;">Правка (<u>E</u>)</div>
<div class="t" style="left:144.0px;top:36px;font-size:12px;color:#e1e0e1;letter-spacing:-0.435px;">Вид (<u>V</u>)</div>
<div class="t" style="left:198.0px;top:36px;font-size:12px;color:#e1e0e1;letter-spacing:-0.195px;">Профиль (<u>P</u>)</div>
<div class="t" style="left:284.2px;top:36px;font-size:12px;color:#e1e0e1;letter-spacing:-0.134px;">Коллекция сцен (<u>S</u>)</div>
<div class="t" style="left:406.6px;top:36px;font-size:12px;color:#e1e0e1;letter-spacing:-0.139px;">Инструменты (<u>T</u>)</div>
<div class="t" style="left:515.0px;top:36px;font-size:12px;color:#e1e0e1;letter-spacing:-0.098px;">Справка (<u>H</u>)</div>
<div class="t" style="left:597.0px;top:36px;font-size:12px;color:#e1e0e1;letter-spacing:-0.265px;">St<u>r</u>eamElements</div>
<div class="t" style="left:98.6px;top:58px;font-size:11px;color:#e1e0e1;letter-spacing:-0.260px;">Информация о трансляции</div>
<div class="t" style="left:389.7px;top:58px;font-size:11px;color:#e1e0e1;letter-spacing:0.184px;">Донаты</div>
<div class="t" style="left:217.3px;top:367px;font-size:11px;color:#e1e0e1;letter-spacing:0.087px;">Chat</div>
<div class="t" style="left:57.9px;top:519px;font-size:11px;color:#e1e0e1;letter-spacing:-0.407px;">Сцены</div>
<div class="t" style="left:210.2px;top:519px;font-size:11px;color:#e1e0e1;letter-spacing:0.077px;">Источники</div>
<div class="t" style="left:394.5px;top:519px;font-size:11px;color:#e1e0e1;letter-spacing:-0.021px;">Микшер аудио</div>
<div class="t" style="left:561.4px;top:519px;font-size:11px;color:#e1e0e1;letter-spacing:-0.102px;">Переходы между сценами</div>
<div class="t" style="left:790.1px;top:519px;font-size:11px;color:#e1e0e1;letter-spacing:-0.096px;">Управление</div>
<div class="t" style="left:21.0px;top:86px;font-size:15px;color:#efeff1;letter-spacing:-0.103px;">Сведения о трансляции</div>
<div class="t" style="left:21.3px;top:138px;font-size:13px;font-weight:700;color:#efeff1;letter-spacing:0.166px;">Название</div>
<div class="t" style="left:89.7px;top:138px;font-size:13px;color:#adadb8;letter-spacing:-0.112px;">(140)</div>
<div class="t" style="left:33.0px;top:169px;font-size:13px;color:#b4b4bb;letter-spacing:0.352px;">Введите название</div>
<div class="t" style="left:21.3px;top:253px;font-size:13px;font-weight:700;color:#efeff1;letter-spacing:0.122px;">Уведомление о трансляции</div>
<div class="t" style="left:209.0px;top:253px;font-size:13px;color:#adadb8;letter-spacing:-0.112px;">(140)</div>
<div class="t" style="left:268.8px;top:253px;font-size:13px;color:#a670f0;letter-spacing:0.398px;">Подробнее</div>
<div class="t" style="left:33.0px;top:284px;font-size:13px;color:#c4c4cb;letter-spacing:0.454px;">pattsa начинает трансляцию!</div>
<div class="t" style="left:408.8px;top:93px;font-size:14px;font-weight:700;color:#f2f2f2;letter-spacing:0.269px;">Oleg</div>
<div class="t" style="left:409.0px;top:114px;font-size:14px;color:#777;letter-spacing:0.056px;">donated</div>
<div class="t" style="left:409.0px;top:135px;font-size:14.5px;color:#f0f0f0;letter-spacing:-0.449px;">250 RUB</div>
<div class="t" style="left:408.8px;top:168px;font-size:14px;color:#ddd;letter-spacing:-0.176px;">тестовый</div>
<div class="t" style="left:409.0px;top:189px;font-size:14px;color:#ddd;letter-spacing:-0.156px;">донат</div>
<div class="t" style="left:410.3px;top:221px;font-size:12px;color:#5e5e5e;letter-spacing:-0.224px;">1 day ago</div>
<div class="t" style="left:182.8px;top:401px;font-size:12px;font-weight:700;color:#efeff1;letter-spacing:0.750px;">ЧАТ ТРАНСЛЯЦИИ</div>
<div class="t" style="left:23.5px;top:447px;font-size:13px;color:#c4c4cb;letter-spacing:0.406px;">Отправить сообщение</div>
<div class="t" style="left:441.7px;top:495px;font-size:12.5px;font-weight:700;color:#fff;letter-spacing:0.480px;">Чат</div>
<div class="t" style="left:494.3px;top:490px;font-size:11px;color:#e1e0e1;letter-spacing:0.032px;">Источник не выбран</div>
<div class="t" style="left:782.8px;top:490px;font-size:11px;color:#7a7a7a;letter-spacing:-0.139px;">Свойства</div>
<div class="t" style="left:862.5px;top:490px;font-size:11px;color:#7a7a7a;letter-spacing:0.163px;">Фильтры</div>
<div class="t" style="left:27.3px;top:540px;font-size:12px;color:#e1e0e1;letter-spacing:-0.418px;">Сцена</div>
<div class="t" style="left:27.3px;top:560px;font-size:12px;color:#e1e0e1;letter-spacing:-0.207px;">Для записи видео</div>
<div class="t" style="left:192.8px;top:539px;font-size:11px;color:#e1e0e1;letter-spacing:-0.200px;">Браузер</div>
<div class="t" style="left:192.8px;top:556px;font-size:11px;color:#e1e0e1;letter-spacing:0.137px;">Захват игры 2</div>
<div class="t" style="left:192.8px;top:590px;font-size:11px;color:#e1e0e1;letter-spacing:-0.172px;">Изображение</div>
<div class="t" style="left:333.9px;top:540px;font-size:10px;color:#e1e0e1;letter-spacing:-0.295px;">Захват выходного аудиопотока</div>
<div class="t" style="left:502.8px;top:540px;font-size:10px;color:#e1e0e1;letter-spacing:-0.220px;">0.0 dB</div>
<div class="t" style="left:334.0px;top:599px;font-size:10px;color:#e1e0e1;letter-spacing:-0.347px;">Устройство воспроизведения</div>
<div class="t" style="left:502.8px;top:599px;font-size:10px;color:#e1e0e1;letter-spacing:-0.220px;">0.0 dB</div>
<div class="t" style="left:334.0px;top:662px;font-size:10px;color:#e1e0e1;letter-spacing:-0.342px;">Устройство воспроизведения 2</div>
<div class="t" style="left:502.8px;top:662px;font-size:10px;color:#e1e0e1;letter-spacing:-0.220px;">0.0 dB</div>
<div class="t" style="left:566.8px;top:545px;font-size:11px;color:#e1e0e1;letter-spacing:0.043px;">Затухание</div>
<div class="t" style="left:557.0px;top:568px;font-size:11px;color:#e1e0e1;letter-spacing:0.084px;">Длительность</div>
<div class="t" style="left:643.0px;top:568px;font-size:11px;color:#e1e0e1;letter-spacing:-0.396px;">300 ms</div>
<div class="t" style="left:781.1px;top:548px;font-size:11.5px;font-weight:700;color:#fff;letter-spacing:0.311px;">Start Streaming</div>
<div class="t" style="left:744.6px;top:574px;font-size:11px;color:#e1e0e1;letter-spacing:0.114px;">Запустить виртуальную камеру</div>
<div class="t" style="left:789.4px;top:597px;font-size:11px;color:#e1e0e1;letter-spacing:-0.019px;">Начать запись</div>
<div class="t" style="left:790.6px;top:620px;font-size:11px;color:#e1e0e1;letter-spacing:-0.032px;">Режим студии</div>
<div class="t" style="left:799.3px;top:643px;font-size:11px;color:#e1e0e1;letter-spacing:0.029px;">Настройки</div>
<div class="t" style="left:809.4px;top:666px;font-size:11px;color:#e1e0e1;letter-spacing:-0.084px;">Выход</div>
<div class="t" style="left:756.4px;top:687px;font-size:11px;color:#1a1ad6;letter-spacing:-0.220px;">StreamElements Live Support</div>
<div class="t" style="left:244.7px;top:715px;font-size:11px;color:#e1e0e1;letter-spacing:-0.106px;">LIVE: 00:00:00</div>
<div class="t" style="left:348.7px;top:715px;font-size:11px;color:#e1e0e1;letter-spacing:-0.097px;">REC: 00:00:00</div>
<div class="t" style="left:445.7px;top:715px;font-size:11px;color:#e1e0e1;letter-spacing:0.038px;">CPU: 10.1%, 30.00 fps</div>
<div class="t" style="left:617.6px;top:715px;font-size:11px;color:#e1e0e1;letter-spacing:-0.287px;">OBS.Live version</div>
<div class="t" style="left:702.3px;top:715px;font-size:11px;color:#e1e0e1;letter-spacing:0.039px;">20.10.28.638</div>
<div class="t" style="left:770.5px;top:715px;font-size:11px;color:#e1e0e1;letter-spacing:-0.181px;">powered by StreamElements</div>
<!-- window border -->
<div class="a" style="left:0;top:0;width:934px;height:1px;background:#596377"></div>
<div class="a" style="left:0;top:0;width:1px;height:732px;background:#596377"></div>
<div class="a" style="left:933px;top:0;width:1px;height:732px;background:#596377"></div>
<div class="a" style="left:0;top:731px;width:934px;height:1px;background:#596377"></div>
</body></html>
